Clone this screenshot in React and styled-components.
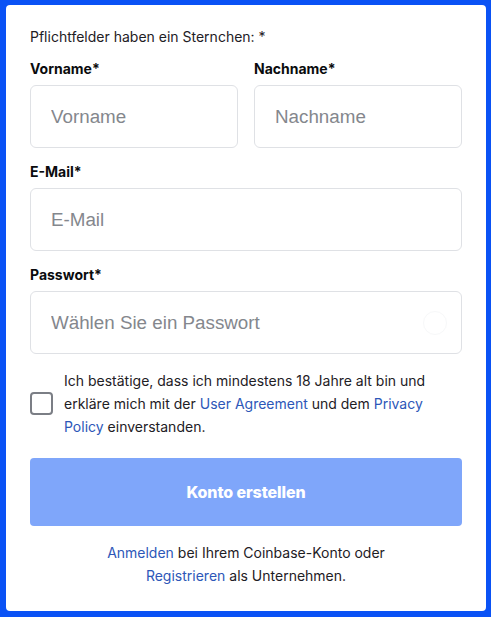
import styled, { createGlobalStyle } from "styled-components";

const GlobalStyle = createGlobalStyle`
  html, body {
    margin: 0;
    padding: 0;
    background: #0a52f5;
  }
  body {
    font-family: Inter, "Noto Sans", sans-serif;
  }
`;

const Page = styled.div`
  width: 491px;
  height: 617px;
  box-sizing: border-box;
  padding: 5px 5px 6px 6px;
  background: #0a52f5;
`;

const Card = styled.form`
  height: 100%;
  box-sizing: border-box;
  background: #ffffff;
  border-radius: 4px;
  padding: 22px 24px 0 24px;
  display: flex;
  flex-direction: column;
`;

const Note = styled.p`
  margin: 0;
  font-size: 14px;
  line-height: 20px;
  color: #1e2025;
`;

const Row = styled.div`
  display: grid;
  grid-template-columns: 1fr 1fr;
  gap: 16px;
  margin-top: 12px;
`;

const Field = styled.div`
  display: flex;
  flex-direction: column;
  margin-top: ${({ $top }) => $top || 0}px;
`;

const Label = styled.label`
  font-size: 14px;
  font-weight: 700;
  line-height: 20px;
  color: #0a0b0d;
  margin-bottom: 6px;
`;

const InputBox = styled.div`
  position: relative;
  height: 63px;
  box-sizing: border-box;
  border: 1px solid #dfe1e5;
  border-radius: 6px;
  display: flex;
  align-items: center;
  padding: 0 14px 0 20px;
`;

const Input = styled.input`
  border: none;
  outline: none;
  width: 100%;
  background: transparent;
  font-family: "Liberation Sans", Arial, sans-serif;
  font-size: 18.8px;
  color: #0a0b0d;
  padding: 0;

  &::placeholder {
    color: #84878d;
  }
`;

const EyeDot = styled.span`
  width: 22px;
  height: 22px;
  border-radius: 50%;
  border: 1px solid #f7f8f9;
  flex-shrink: 0;
`;

const Consent = styled.div`
  display: flex;
  align-items: center;
  gap: 11px;
  margin-top: 15px;
`;

const Box = styled.span`
  width: 23px;
  height: 23px;
  border: 2px solid #7b7e85;
  border-radius: 4px;
  flex-shrink: 0;
  box-sizing: border-box;
`;

const ConsentText = styled.p`
  margin: 0;
  font-size: 14px;
  line-height: 23px;
  color: #1e2025;
`;

const Link = styled.a`
  color: #2d57b8;
  text-decoration: none;
`;

const Submit = styled.button`
  margin-top: 20px;
  height: 68px;
  flex-shrink: 0;
  border: none;
  border-radius: 4px;
  background: #7fa6fa;
  color: #ffffff;
  font-family: Inter, "Noto Sans", sans-serif;
  font-size: 16px;
  font-weight: 800;
  letter-spacing: -0.1px;
`;

const Footer = styled.p`
  margin: 15px 0 0 0;
  text-align: center;
  font-size: 14px;
  line-height: 23px;
  color: #1e2025;
`;

export default function App() {
  return (
    <Page>
      <GlobalStyle />
      <Card onSubmit={(e) => e.preventDefault()}>
        <Note>Pflichtfelder haben ein Sternchen: *</Note>
        <Row>
          <Field>
            <Label>Vorname*</Label>
            <InputBox>
              <Input placeholder="Vorname" />
            </InputBox>
          </Field>
          <Field>
            <Label>Nachname*</Label>
            <InputBox>
              <Input placeholder="Nachname" />
            </InputBox>
          </Field>
        </Row>
        <Field $top={14}>
          <Label>E-Mail*</Label>
          <InputBox>
            <Input placeholder="E-Mail" />
          </InputBox>
        </Field>
        <Field $top={14}>
          <Label>Passwort*</Label>
          <InputBox>
            <Input type="password" placeholder="Wählen Sie ein Passwort" />
            <EyeDot />
          </InputBox>
        </Field>
        <Consent>
          <Box />
          <ConsentText>
            Ich bestätige, dass ich mindestens 18 Jahre alt bin und erkläre mich mit der{" "}
            <Link href="#">User Agreement</Link> und dem <Link href="#">Privacy Policy</Link>{" "}
            einverstanden.
          </ConsentText>
        </Consent>
        <Submit type="submit">Konto erstellen</Submit>
        <Footer>
          <Link href="#">Anmelden</Link> bei Ihrem Coinbase-Konto oder
          <br />
          <Link href="#">Registrieren</Link> als Unternehmen.
        </Footer>
      </Card>
    </Page>
  );
}
